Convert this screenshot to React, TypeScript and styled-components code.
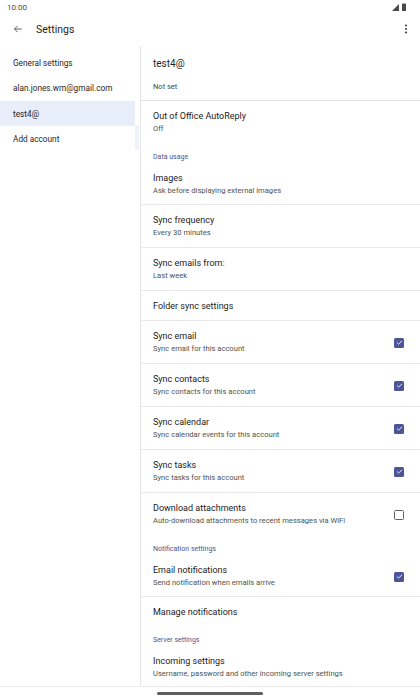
import { createGlobalStyle } from 'styled-components'
import styled from 'styled-components'

const GlobalStyle = createGlobalStyle`
  html, body {
    margin: 0;
    padding: 0;
    background: #ffffff;
  }
  body {
    font-family: Roboto, 'Noto Sans', 'Liberation Sans', sans-serif;
    color: #1f1f1f;
  }
  * {
    box-sizing: border-box;
  }
`

const Screen = styled.div`
  width: 420px;
  height: 700px;
  display: flex;
  flex-direction: column;
  overflow: hidden;
  background: #ffffff;
`

const StatusBar = styled.div`
  height: 14px;
  flex-shrink: 0;
  display: flex;
  align-items: center;
  justify-content: space-between;
  padding: 0 14px 0 7px;
  font-size: 8px;
  color: #4a4a4a;
`

const StatusIcons = styled.div`
  display: flex;
  align-items: center;
  gap: 3px;
`

const TopBar = styled.div`
  height: 30px;
  flex-shrink: 0;
  display: flex;
  align-items: center;
  padding: 0 12px 0 13px;
`

const IconButton = styled.button`
  border: 0;
  background: none;
  padding: 0;
  display: flex;
  align-items: center;
  justify-content: center;
  color: #444746;
`

const Title = styled.h1`
  margin: 0 0 0 13px;
  font-size: 10.5px;
  font-weight: 400;
  color: #1f1f1f;
  flex: 1;
`

const Body = styled.div`
  flex: 1;
  display: flex;
  min-height: 0;
`

const Sidebar = styled.nav`
  width: 140px;
  padding-top: 6px;
  position: relative;
  flex-shrink: 0;
`

const NavItem = styled.div<{ $selected?: boolean }>`
  width: 135px;
  height: 25px;
  display: flex;
  align-items: center;
  padding-left: 13px;
  font-size: 8.25px;
  color: #1f1f1f;
  background: ${(p) => (p.$selected ? '#e8eef9' : 'transparent')};
  margin-top: ${(p) => (p.$selected ? '1px' : '0')};
`

const ScrollThumb = styled.div`
  position: absolute;
  left: 135px;
  top: 81px;
  width: 4px;
  height: 25px;
  background: #eef2fa;
`

const Content = styled.main`
  flex: 1;
  margin-top: 2px;
  border-left: 1px solid #e6e6e6;
  overflow: hidden;
`

const AccountHeader = styled.div`
  height: 55px;
  padding: 11px 12px 0;
  border-bottom: 1px solid #e4e4e4;
`

const AccountName = styled.div`
  font-size: 10px;
  line-height: 13px;
  color: #1f1f1f;
`

const AccountSub = styled.div`
  margin-top: 11px;
  font-size: 7.5px;
  line-height: 12px;
  color: #444746;
`

const Row = styled.div<{ $divider?: boolean; $compact?: boolean; $single?: boolean }>`
  display: flex;
  align-items: center;
  padding: ${(p) =>
    p.$compact ? '8px 16px 7px 12px' : p.$single ? '9px 16px 7px 12px' : '9px 16px 8px 12px'};
  border-bottom: ${(p) => (p.$divider ? '1px solid #e8e8e8' : '0')};
`

const RowText = styled.div`
  flex: 1;
  min-width: 0;
`

const RowTitle = styled.div`
  font-size: 9px;
  line-height: 13px;
  color: #1b1b1b;
  white-space: nowrap;
`

const RowSub = styled.div`
  font-size: 7.6px;
  line-height: 12px;
  color: #4f5350;
  white-space: nowrap;
`

const SectionHeader = styled.div`
  padding: 9px 12px 2px;
  font-size: 7px;
  line-height: 10px;
  color: #4a5694;
`

const Check = styled.div<{ $checked: boolean }>`
  width: 10px;
  height: 10px;
  border-radius: 1.5px;
  display: flex;
  align-items: center;
  justify-content: center;
  background: ${(p) => (p.$checked ? '#4b5597' : 'transparent')};
  border: ${(p) => (p.$checked ? '0' : '1.5px solid #5f6368')};
  flex-shrink: 0;
`

const NavBar = styled.div`
  height: 14px;
  flex-shrink: 0;
  border-top: 1px solid #ececec;
  display: flex;
  align-items: center;
  justify-content: center;
`

const Handle = styled.div`
  width: 106px;
  height: 2.5px;
  border-radius: 2px;
  background: #5f5f5f;
`

type Item =
  | { kind: 'header'; label: string }
  | {
      kind: 'row'
      title: string
      sub?: string
      divider?: boolean
      compact?: boolean
      checked?: boolean
    }

const items: Item[] = [
  { kind: 'row', title: 'Out of Office AutoReply', sub: 'Off' },
  { kind: 'header', label: 'Data usage' },
  {
    kind: 'row',
    title: 'Images',
    sub: 'Ask before displaying external images',
    divider: true,
    compact: true,
  },
  { kind: 'row', title: 'Sync frequency', sub: 'Every 30 minutes', divider: true },
  { kind: 'row', title: 'Sync emails from:', sub: 'Last week', divider: true },
  { kind: 'row', title: 'Folder sync settings', divider: true },
  {
    kind: 'row',
    title: 'Sync email',
    sub: 'Sync email for this account',
    divider: true,
    checked: true,
  },
  {
    kind: 'row',
    title: 'Sync contacts',
    sub: 'Sync contacts for this account',
    divider: true,
    checked: true,
  },
  {
    kind: 'row',
    title: 'Sync calendar',
    sub: 'Sync calendar events for this account',
    divider: true,
    checked: true,
  },
  {
    kind: 'row',
    title: 'Sync tasks',
    sub: 'Sync tasks for this account',
    divider: true,
    checked: true,
  },
  {
    kind: 'row',
    title: 'Download attachments',
    sub: 'Auto-download attachments to recent messages via WiFi',
    checked: false,
  },
  { kind: 'header', label: 'Notification settings' },
  {
    kind: 'row',
    title: 'Email notifications',
    sub: 'Send notification when emails arrive',
    divider: true,
    compact: true,
    checked: true,
  },
  { kind: 'row', title: 'Manage notifications' },
  { kind: 'header', label: 'Server settings' },
  {
    kind: 'row',
    title: 'Incoming settings',
    sub: 'Username, password and other incoming server settings',
    compact: true,
  },
]

const accounts = ['General settings', 'alan.jones.wm@gmail.com', 'test4@', 'Add account']

function Checkbox({ checked }: { checked: boolean }) {
  return (
    <Check $checked={checked}>
      {checked && (
        <svg width="7" height="7" viewBox="0 0 24 24">
          <path
            d="M4 12.5l5 5L20 7"
            fill="none"
            stroke="#ffffff"
            strokeWidth="3"
            strokeLinecap="round"
            strokeLinejoin="round"
          />
        </svg>
      )}
    </Check>
  )
}

export default function App() {
  return (
    <Screen>
      <GlobalStyle />
      <StatusBar>
        <span>10:00</span>
        <StatusIcons>
          <svg width="7" height="7" viewBox="0 0 10 10">
            <path d="M10 0L10 10L0 10Z" fill="#4a4a4a" />
          </svg>
          <svg width="4" height="8" viewBox="0 0 4 8">
            <rect x="0" y="0.5" width="4" height="7.5" rx="0.6" fill="#4a4a4a" />
          </svg>
        </StatusIcons>
      </StatusBar>

      <TopBar>
        <IconButton aria-label="Back">
          <svg width="10" height="10" viewBox="0 0 24 24">
            <path
              d="M21 12H4M11 4.5L3.5 12l7.5 7.5"
              fill="none"
              stroke="#444746"
              strokeWidth="2"
            />
          </svg>
        </IconButton>
        <Title>Settings</Title>
        <IconButton aria-label="More options">
          <svg width="4" height="10" viewBox="0 0 4 10">
            <circle cx="2" cy="1.5" r="1.1" fill="#444746" />
            <circle cx="2" cy="5" r="1.1" fill="#444746" />
            <circle cx="2" cy="8.5" r="1.1" fill="#444746" />
          </svg>
        </IconButton>
      </TopBar>

      <Body>
        <Sidebar>
          {accounts.map((a) => (
            <NavItem key={a} $selected={a === 'test4@'}>
              {a}
            </NavItem>
          ))}
          <ScrollThumb />
        </Sidebar>

        <Content>
          <AccountHeader>
            <AccountName>test4@</AccountName>
            <AccountSub>Not set</AccountSub>
          </AccountHeader>
          {items.map((it, i) =>
            it.kind === 'header' ? (
              <SectionHeader key={i}>{it.label}</SectionHeader>
            ) : (
              <Row
                key={i}
                $divider={it.divider}
                $compact={it.compact}
                $single={!it.sub}
              >
                <RowText>
                  <RowTitle>{it.title}</RowTitle>
                  {it.sub && <RowSub>{it.sub}</RowSub>}
                </RowText>
                {it.checked !== undefined && <Checkbox checked={it.checked} />}
              </Row>
            ),
          )}
        </Content>
      </Body>

      <NavBar>
        <Handle />
      </NavBar>
    </Screen>
  )
}
